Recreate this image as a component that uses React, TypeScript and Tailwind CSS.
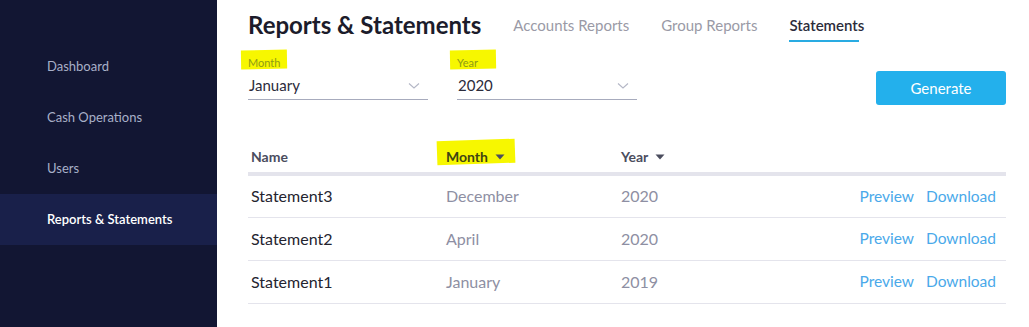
import { ReactNode } from "react";

const navItems = ["Dashboard", "Cash Operations", "Users", "Reports & Statements"];

const rows = [
  { name: "Statement3", month: "December", year: "2020" },
  { name: "Statement2", month: "April", year: "2020" },
  { name: "Statement1", month: "January", year: "2019" },
];

function Chevron() {
  return (
    <svg width="12" height="8" viewBox="0 0 12 8" className="text-[#b4b7c6]">
      <path d="M1 1.5 L6 6 L11 1.5" fill="none" stroke="currentColor" strokeWidth="1.1" />
    </svg>
  );
}

function SortCaret() {
  return (
    <svg width="10" height="6" viewBox="0 0 10 6" className="ml-[7px] text-[#4b4d5e]">
      <path d="M0.5 0.5 H9.5 L5 5.5 Z" fill="currentColor" />
    </svg>
  );
}

function Marker({ children, className }: { children: ReactNode; className: string }) {
  return (
    <span className="relative inline-block">
      <span className={"absolute bg-[#f7f700] " + className} />
      <span className="relative">{children}</span>
    </span>
  );
}

function Select({ label, value }: { label: string; value: string }) {
  return (
    <div className="w-[180px]">
      <div className="h-[18px] text-[11px] leading-[18px] text-[#8f9a14]">
        <Marker className="-left-[7px] -top-[4px] h-[19px] w-[46px] -rotate-1">{label}</Marker>
      </div>
      <div className="flex h-[28px] items-center justify-between border-b border-[#a7abbd] pl-[1px] pr-[8px]">
        <span className="text-[15px] text-[#2b2b3b]">{value}</span>
        <Chevron />
      </div>
    </div>
  );
}

function Tab({ label, active }: { label: string; active?: boolean }) {
  return (
    <div className="flex flex-col pt-[6px]">
      <span className={active ? "font-semibold text-[#2c2c3a]" : "text-[#9a9aa6]"}>{label}</span>
      <div className={"mt-[4px] h-[2px] w-[70px] " + (active ? "bg-[#29abe2]" : "bg-transparent")} />
    </div>
  );
}

export default function App() {
  return (
    <div className="flex h-[327px] w-[1029px] bg-white font-['Lato',sans-serif]">
      <aside className="w-[217px] shrink-0 bg-[#121633] pt-[41px]">
        {navItems.map((item) => {
          const active = item === "Reports & Statements";
          return (
            <div
              key={item}
              className={
                "flex h-[51px] items-center pl-[47px] text-[13px] " +
                (active ? "bg-[#19204a] font-semibold text-white" : "text-[#a8b0c8]")
              }
            >
              {item}
            </div>
          );
        })}
      </aside>

      <main className="flex-1 pl-[31px] pr-[24px]">
        <div className="flex h-[48px] items-center pt-[2px]">
          <h1 className="text-[24px] font-bold leading-[36px] text-[#1c1c2b]">Reports &amp; Statements</h1>
          <nav className="ml-[32px] flex gap-[32px] text-[15px]">
            <Tab label="Accounts Reports" />
            <Tab label="Group Reports" />
            <Tab label="Statements" active />
          </nav>
        </div>

        <div className="mt-[6px] flex items-start">
          <Select label="Month" value="January" />
          <div className="ml-[29px]">
            <Select label="Year" value="2020" />
          </div>
          <button className="ml-auto mt-[17px] h-[34px] w-[130px] rounded-[3px] bg-[#23b0ec] text-[15px] text-white">
            Generate
          </button>
        </div>

        <table className="mt-[36px] w-[758px] border-collapse text-left">
          <thead>
            <tr className="border-b-[4px] border-[#e4e4ec] text-[14px] font-bold text-[#4b4d5e]">
              <th className="h-[33px] w-[198px] pl-[3px] font-bold">Name</th>
              <th className="w-[175px] font-bold">
                <Marker className="-left-[9px] -top-[6px] h-[24px] w-[78px] -rotate-2">
                  <span className="flex items-center text-[#3f4414]">
                    Month
                    <SortCaret />
                  </span>
                </Marker>
              </th>
              <th className="font-bold">
                <span className="flex items-center">
                  Year
                  <SortCaret />
                </span>
              </th>
              <th />
            </tr>
          </thead>
          <tbody>
            {rows.map((r) => (
              <tr key={r.name} className="h-[43px] border-b border-[#e4e4ec] text-[16px]">
                <td className="pl-[3px] text-[#24242f]">{r.name}</td>
                <td className="text-[#8e8fa3]">{r.month}</td>
                <td className="text-[#8e8fa3]">{r.year}</td>
                <td className="pr-[10px] text-right text-[15.5px] text-[#4aa9ea]">
                  <span>Preview</span>
                  <span className="ml-[12px]">Download</span>
                </td>
              </tr>
            ))}
          </tbody>
        </table>
      </main>
    </div>
  );
}
